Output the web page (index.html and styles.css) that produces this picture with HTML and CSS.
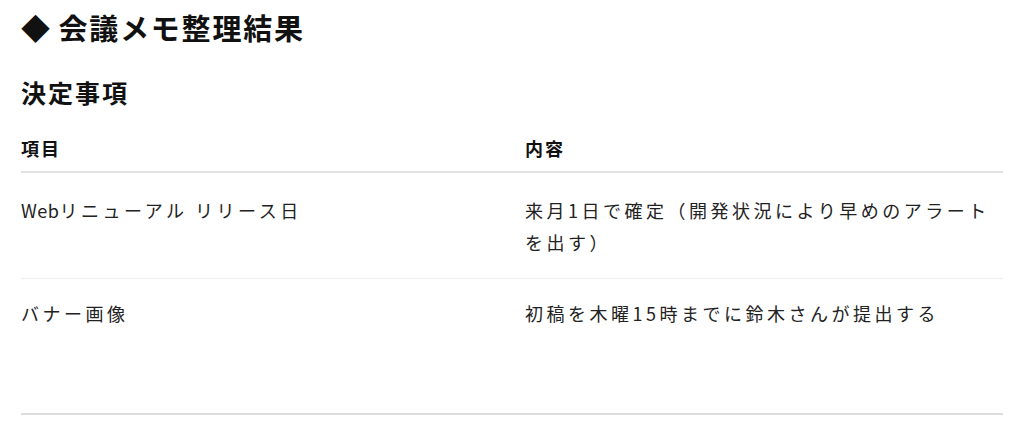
FILE: index.html
```html
<!DOCTYPE html>
<html lang="ja">
<head>
<meta charset="utf-8">
<title>会議メモ整理結果</title>
<link rel="stylesheet" href="styles.css">
</head>
<body>
<main class="page">
  <h1 class="title"><span class="diamond">◆</span> 会議メモ整理結果</h1>
  <h2 class="section">決定事項</h2>
  <table class="memo">
    <colgroup><col class="c1"><col class="c2"></colgroup>
    <thead>
      <tr><th>項目</th><th>内容</th></tr>
    </thead>
    <tbody>
      <tr class="r1"><td><span class="lat">Web</span>リニューアル リリース日</td><td>来月1日で確定（開発状況により早めのアラートを出す）</td></tr>
      <tr class="r2"><td>バナー画像</td><td>初稿を木曜15時までに鈴木さんが提出する</td></tr>
    </tbody>
  </table>
</main>
</body>
</html>
```

FILE: styles.css
```css
html, body {
  margin: 0;
  padding: 0;
  background: #fff;
}
body {
  font-family: "Noto Sans CJK JP", "Noto Sans", sans-serif;
  color: #222;
}
.page {
  padding: 0 21px;
}
.title {
  margin: 0;
  padding-top: 8px;
  font-size: 29px;
  line-height: 38px;
  font-weight: 700;
  letter-spacing: 1.8px;
  color: #111;
}
.diamond {
  letter-spacing: 0;
}
.section {
  margin: 0;
  padding-top: 29px;
  font-size: 25px;
  line-height: 34px;
  font-weight: 700;
  letter-spacing: 2px;
  color: #111;
}
.memo {
  width: 100%;
  margin-top: 26px;
  border-collapse: collapse;
  table-layout: fixed;
}
.c1 { width: 504px; }
.memo th {
  text-align: left;
  font-size: 18px;
  font-weight: 700;
  letter-spacing: 2px;
  line-height: 26px;
  padding: 0 0 10px 0;
  color: #111;
  border-bottom: 2px solid #e2e2e2;
}
.memo td {
  vertical-align: top;
  font-size: 18px;
  line-height: 32px;
  letter-spacing: 3.5px;
  padding: 21px 12px 20px 0;
  color: #222;
}
.lat {
  letter-spacing: 0.5px;
}
.r1 td {
  border-bottom: 1px solid #efefef;
}
.r2 td {
  height: 96px;
  padding-top: 18px;
  border-bottom: 2px solid #dcdcdc;
}
```
